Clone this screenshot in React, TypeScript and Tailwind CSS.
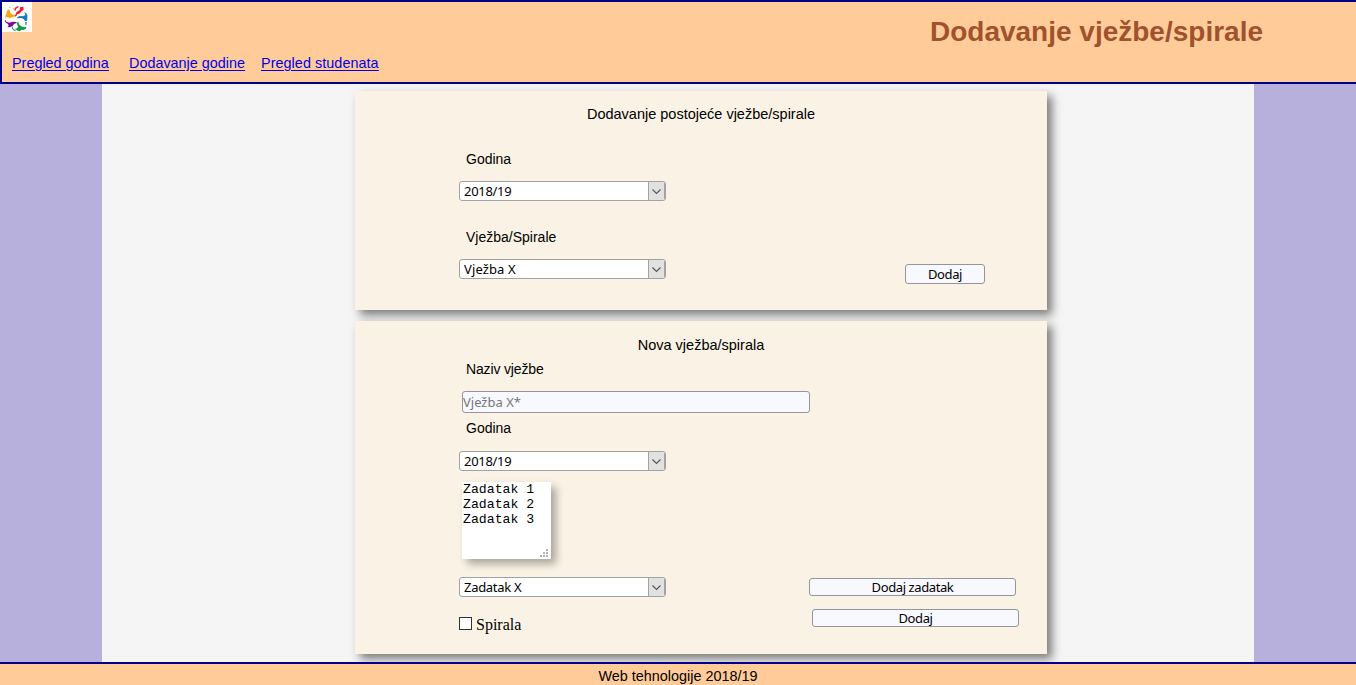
import React from 'react';

const ui = "font-['Noto_Sans',sans-serif] text-[13px] leading-[16px] text-black";

function Logo() {
  return (
    <svg width="30" height="30" viewBox="6 6 90 90" className="block bg-white">
      <path d="M23 28l6 3 3 9 7 4 11 1v3l-9 2-11 5-8-4-6 3 1-10 4-8z" fill="#f7a41d" />
      <path d="M27 20h6v3h-6zM39 23h3v6h-3z" fill="#fbc56c" />
      <path d="M44 24l8-5 6 1-8 5-4 7h-3zM60 22l10-2 1 10-6 3-5 7-8 3-5 7-2-3 5-11 9-6z" fill="#ee1c25" />
      <path d="M72 37l6 2 4 6v12l-2 7-5-1-4-6-8-3-10 1-2-3 8-4 9 1 8-3-1-5z" fill="#1778bd" />
      <path d="M16 59l3 6 10 3 8-3 14 1-3 4-6 2-4 6-8 4-8-1 4-4-2-5-6-4-4-5z" fill="#7d1184" />
      <path d="M54 64l4 10 8 6 13 1-2 5-6 4-6-1-6 5-9-3-5-4 7-2 2-6-4-8z" fill="#139a48" />
      <path d="M76 66h4v8h-4zM37 79l3 8 7 4-1 3-6-3-5-7z" fill="#139a48" />
    </svg>
  );
}

function Select({ value, tracking = 'tracking-[-0.3px]' }: { value: string; tracking?: string }) {
  return (
    <div className="flex h-5 w-[207px] overflow-hidden rounded-[3px] border border-[#a2a2a2] bg-white">
      <span className={`flex-1 pt-px pl-1 ${ui} ${tracking}`}>{value}</span>
      <span className="flex w-[17px] items-center justify-center border-r border-l border-[#a2a2a2] bg-[#e1e1e1]">
        <svg width="9" height="6" viewBox="0 0 9 6" fill="none" stroke="#555" strokeWidth="1.1" className="mt-[2px] mr-px">
          <path d="M.5 .5l4 4 4-4" />
        </svg>
      </span>
    </div>
  );
}

function Button({ children, className }: { children: string; className: string }) {
  return (
    <button className={`flex items-center justify-center rounded-[3px] border border-[#95959d] bg-[#f8f8ff] ${ui} tracking-[-0.4px] ${className}`}>
      {children}
    </button>
  );
}

const label = 'pl-[7px] text-[14px] leading-[18px]';
const card = 'w-[692px] bg-[#faf3e5] shadow-[5px_5px_9px_rgba(0,0,0,0.5)]';

export default function App() {
  return (
    <div className="flex h-[685px] w-full flex-col overflow-hidden bg-[#b8b0dc] font-['Liberation_Sans',Arial,sans-serif] text-black">
      <header className="relative z-10 flex h-[84px] shrink-0 justify-between border-2 border-r-0 border-[#00008b] bg-[#ffcc99]">
        <div className="flex flex-col">
          <Logo />
          <nav className="flex pt-[22px] pl-[10px] text-[14.4px] leading-[18px] text-[#0000ee] underline underline-offset-2">
            <a className="w-[117px]">Pregled godina</a>
            <a className="w-[132px]">Dodavanje godine</a>
            <a className="tracking-[0.05px]">Pregled studenata</a>
          </nav>
        </div>
        <h1 className="pt-[14px] pr-[93px] text-[28px] leading-[32px] font-bold text-[#a0522d]">Dodavanje vježbe/spirale</h1>
      </header>

      <main className="mx-[102px] flex h-[578px] shrink-0 flex-col gap-[11px] bg-[#f5f5f5] pt-[7px] pl-[253px]">
        <section className={`h-[219px] ${card}`}>
          <h2 className="pt-[14px] text-center text-[14.5px] leading-[18px]">Dodavanje postojeće vježbe/spirale</h2>
          <div className="flex justify-between pt-[27px] pr-[62px] pl-[104px]">
            <div>
              <div className={label}>Godina</div>
              <div className="pt-[13px]"><Select value="2018/19" /></div>
              <div className={`pt-[27px] ${label}`}>Vježba/Spirale</div>
              <div className="pt-[13px]"><Select value="Vježba X" tracking="tracking-[0.12px]" /></div>
            </div>
            <Button className="mt-[114px] h-5 w-20">Dodaj</Button>
          </div>
        </section>

        <section className={`h-[333px] ${card}`}>
          <h2 className="pt-[15px] text-center text-[14.5px] leading-[18px]">Nova vježba/spirala</h2>
          <div className="flex pt-[6px] pl-[104px]">
            <div className="w-[350px]">
              <div className={`tracking-[-0.15px] ${label}`}>Naziv vježbe</div>
              <div className="mt-[13px] ml-[3px] h-[22px] w-[348px] rounded-[3px] border border-[#95959d] bg-[#f8f8ff] pt-[2px] font-['Noto_Sans',sans-serif] text-[13px] leading-[16px] text-[#777]">
                Vježba X*
              </div>
              <div className={`pt-[6px] ${label}`}>Godina</div>
              <div className="pt-[14px]"><Select value="2018/19" /></div>
              <div className="mt-[11px] ml-[3px] flex h-[77px] w-[89px] flex-col justify-between bg-white pl-px shadow-[5px_5px_8px_rgba(0,0,0,0.32)]">
                <div className="font-['Liberation_Mono',monospace] text-[13.2px] leading-[15px] whitespace-pre">{'Zadatak 1\nZadatak 2\nZadatak 3'}</div>
                <svg width="8" height="8" viewBox="0 0 8 8" className="mr-[3px] mb-[2px] self-end" fill="#b5b5b5" shapeRendering="crispEdges">
                  <path d="M6 0h2v2H6zM3 3h2v2H3zM6 3h2v2H6zM0 6h2v2H0zM3 6h2v2H3zM6 6h2v2H6z" />
                </svg>
              </div>
              <div className="pt-[18px]"><Select value="Zadatak X" /></div>
              <div className="flex pt-[19px]">
                <span className="mt-[1px] h-[13px] w-[13px] border border-[#333] bg-white" />
                <span className="pl-1 font-['Liberation_Serif',serif] text-[16px] leading-[18px]">Spirala</span>
              </div>
            </div>
            <div className="flex flex-col gap-[13px] pt-[218px]">
              <Button className="h-[18px] w-[207px]">Dodaj zadatak</Button>
              <Button className="ml-[3px] h-[18px] w-[207px]">Dodaj</Button>
            </div>
          </div>
        </section>
      </main>

      <footer className="relative z-10 h-[23px] shrink-0 border-t-2 border-[#00008b] bg-[#ffcc99] pt-[3px] text-center text-[14.4px] leading-[18px]">
        Web tehnologije 2018/19
      </footer>
    </div>
  );
}
